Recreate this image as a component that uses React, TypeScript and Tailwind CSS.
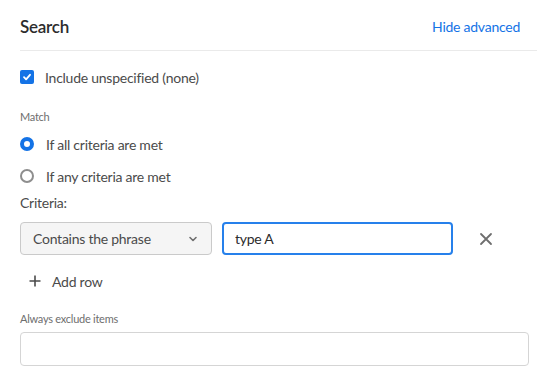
import React, { useState } from 'react';

export default function App() {
  const [includeNone, setIncludeNone] = useState(true);
  const [match, setMatch] = useState<'all' | 'any'>('all');
  const [phrase, setPhrase] = useState('type A');

  return (
    <div className="w-[537px] h-[367px] overflow-hidden bg-white pl-5 pr-2 text-[#4b4b4b] tracking-[-0.25px]" style={{ fontFamily: 'Lato, "Open Sans", sans-serif' }}>
      {/* header */}
      <div className="flex items-center justify-between h-[51px] border-b border-[#eaeaea] -mr-2 pr-[17px] pt-[3px]">
        <h2 className="text-[17px] font-semibold text-[#2c2c2c]">Search</h2>
        <button className="text-[14px] text-[#1473e6]">Hide advanced</button>
      </div>

      {/* include unspecified */}
      <label className="flex items-center h-[52px] gap-[11px] cursor-pointer">
        <span
          onClick={() => setIncludeNone(!includeNone)}
          className={`w-[14px] h-[14px] rounded-[2px] flex items-center justify-center ${includeNone ? 'bg-[#1473e6]' : 'border-2 border-[#8e8e8e]'}`}
        >
          {includeNone && (
            <svg width="10" height="10" viewBox="0 0 10 10">
              <path d="M2 5.2 L4.1 7.3 L8 2.8" fill="none" stroke="white" strokeWidth="1.8" strokeLinecap="round" strokeLinejoin="round" />
            </svg>
          )}
        </span>
        <span className="text-[14px]">Include unspecified (none)</span>
      </label>

      {/* match */}
      <div className="mt-[5px] text-[11px] text-[#6e6e6e] h-[18px] leading-[18px]">Match</div>
      <div className="mt-[2px]">
        {(['all', 'any'] as const).map((m) => (
          <div key={m} className="flex items-center h-[32px] gap-[12px] cursor-pointer" onClick={() => setMatch(m)}>
            {match === m ? (
              <span className="w-[14px] h-[14px] rounded-full border-[4px] border-[#1473e6] bg-white" />
            ) : (
              <span className="w-[14px] h-[14px] rounded-full border-2 border-[#8e8e8e] bg-white" />
            )}
            <span className="text-[14px]">If {m} criteria are met</span>
          </div>
        ))}
      </div>

      <div className="text-[14px] h-[22px] leading-[22px]">Criteria:</div>

      {/* criteria row */}
      <div className="flex items-center mt-[8px] gap-[10px]">
        <div className="w-[192px] h-[33px] flex items-center justify-between bg-[#f5f5f5] border border-[#cacaca] rounded-[4px] pl-[12px] pr-[13px]">
          <span className="text-[14px]">Contains the phrase</span>
          <svg width="10" height="10" viewBox="0 0 10 10">
            <path d="M2 3.5 L5 6.5 L8 3.5" fill="none" stroke="#6e6e6e" strokeWidth="1.6" strokeLinecap="round" strokeLinejoin="round" />
          </svg>
        </div>
        <input
          value={phrase}
          onChange={(e) => setPhrase(e.target.value)}
          className="w-[231px] h-[33px] border-2 border-[#2680eb] rounded-[4px] px-[11px] text-[14px] text-[#2c2c2c] outline-none"
        />
        <button className="ml-[16px] w-[14px] h-[14px] flex items-center justify-center">
          <svg width="14" height="14" viewBox="0 0 14 14">
            <path d="M2 2 L12 12 M12 2 L2 12" stroke="#6e6e6e" strokeWidth="1.8" strokeLinecap="round" />
          </svg>
        </button>
      </div>

      {/* add row */}
      <button className="flex items-center h-[22px] mt-[15px] ml-[9px] gap-[11px]">
        <svg width="12" height="12" viewBox="0 0 12 12">
          <path d="M6 0.5 V11.5 M0.5 6 H11.5" stroke="#4b4b4b" strokeWidth="1.6" />
        </svg>
        <span className="text-[14px]">Add row</span>
      </button>

      {/* always exclude */}
      <div className="mt-[19px] text-[11px] text-[#6e6e6e] h-[16px] leading-[16px]">Always exclude items</div>
      <input className="mt-[5px] w-[509px] h-[34px] border border-[#d5d5d5] rounded-[4px] px-[11px] text-[14px] outline-none" />
    </div>
  );
}
